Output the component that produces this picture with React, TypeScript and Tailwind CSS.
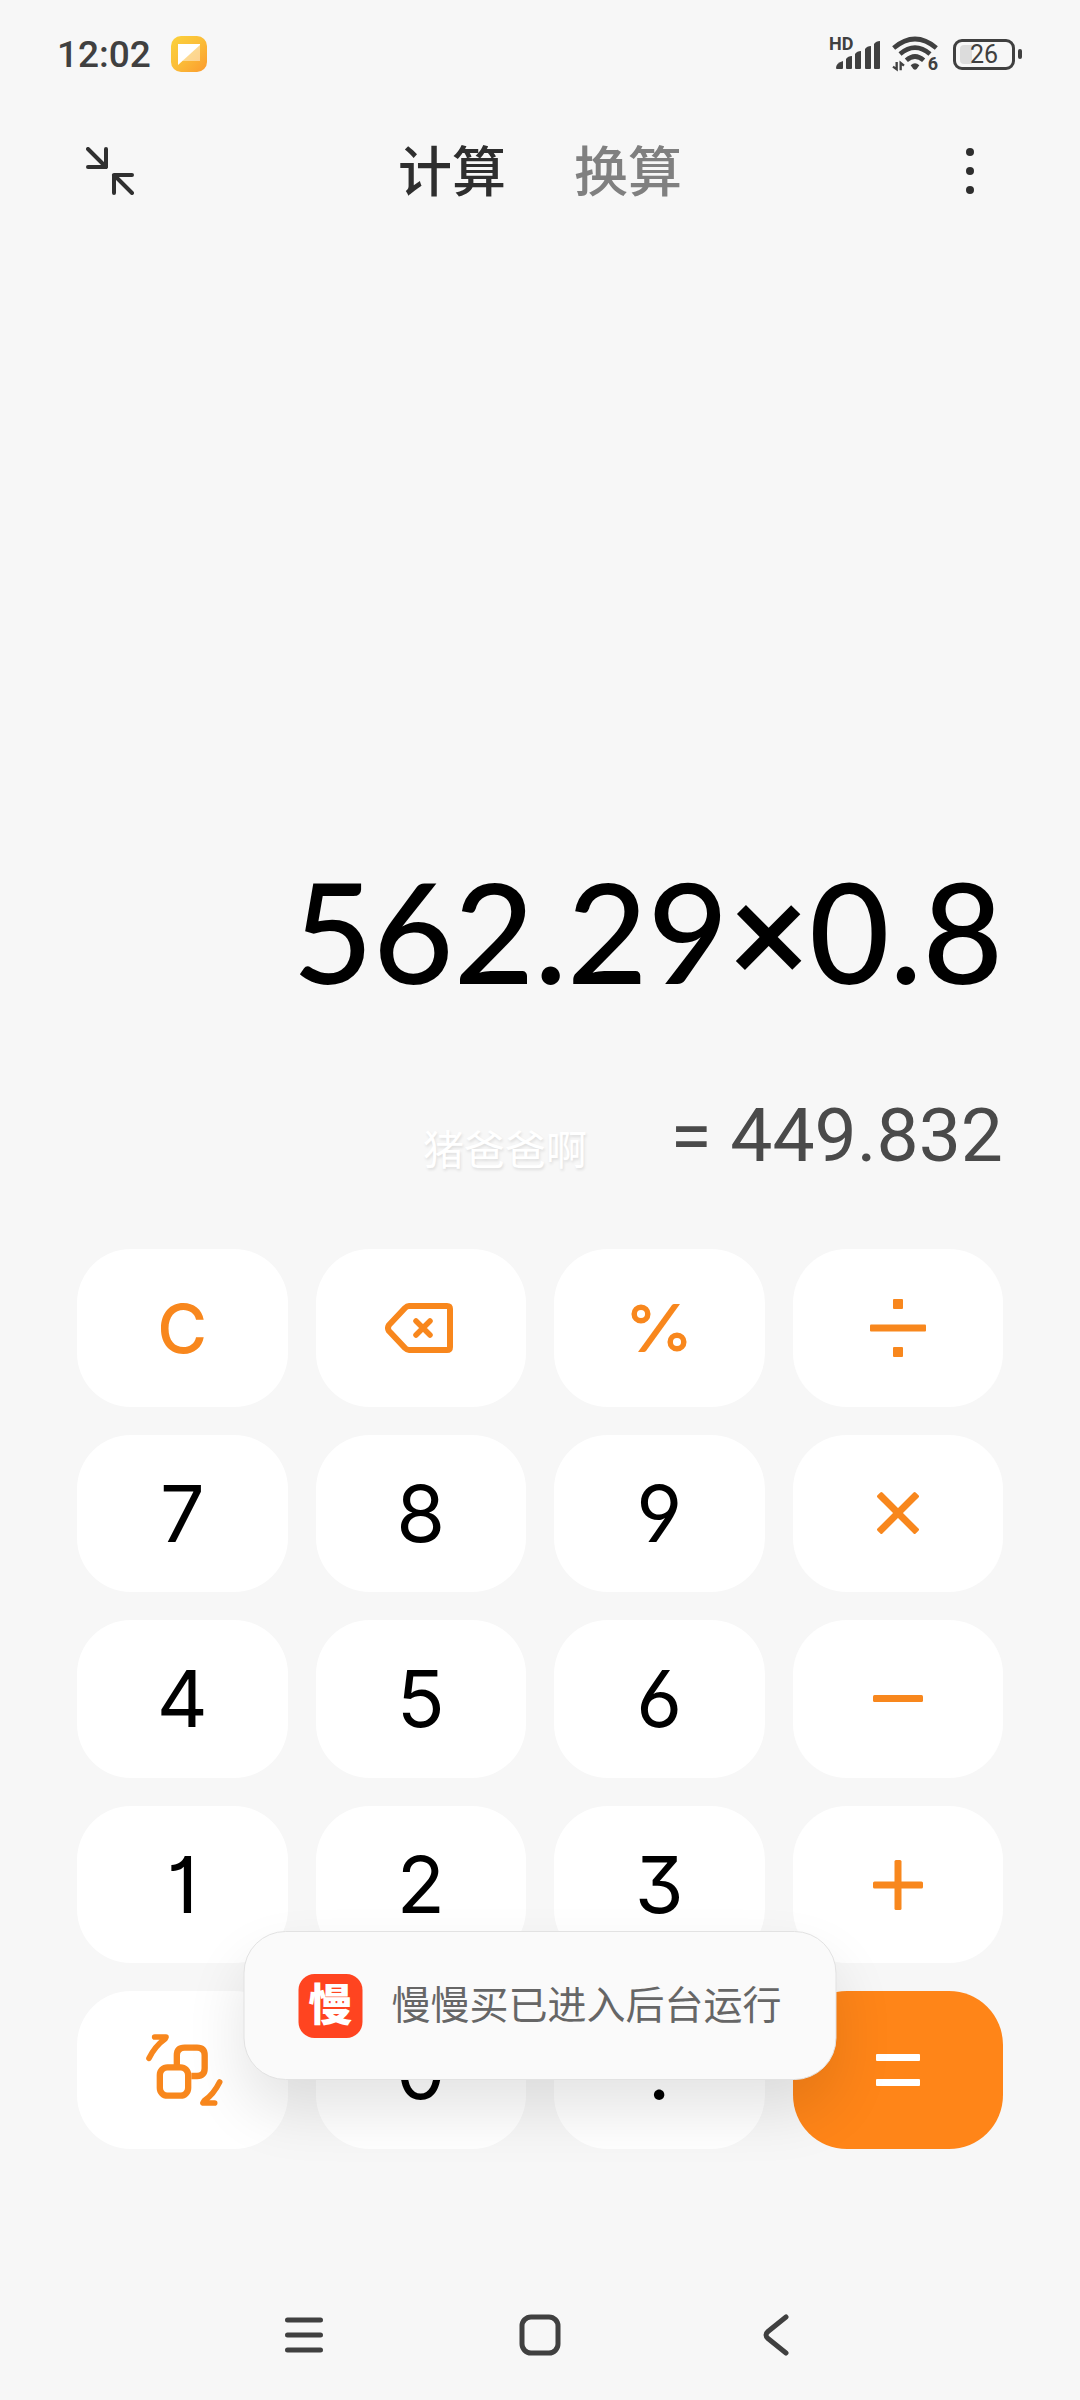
import { ReactNode, useState } from 'react';

type Key = {
  id: string;
  label: string;
  content: ReactNode;
  variant?: 'operator' | 'primary';
};

const tabs = ['计算', '换算'];

function NotesBadge() {
  return (
    <svg width="36" height="36" viewBox="0 0 36 36" aria-hidden="true">
      <defs>
        <linearGradient id="notes" x1="0" y1="0" x2="1" y2="1">
          <stop offset="0" stopColor="#fbd23c" />
          <stop offset="0.5" stopColor="#fbbd38" />
          <stop offset="1" stopColor="#fb9a2e" />
        </linearGradient>
      </defs>
      <rect width="36" height="36" rx="10" fill="url(#notes)" />
      <path d="M29 8v17H11z" fill="#fff" opacity="0.45" />
      <path d="M7 8h22v1L7 29z" fill="#fff" />
    </svg>
  );
}

function SignalIcon() {
  return (
    <svg width="44" height="32" viewBox="0 0 44 32" aria-hidden="true">
      <g fill="#404040">
        <path d="M0 30q0-5 7-7v7q0 1-1 1H1q-1 0-1-1z" />
        <path d="M10 30V21q2-3 6-3v12q0 1-1 1h-4q-1 0-1-1z" />
        <path d="M19 30V16q2-3 6-3v17q0 1-1 1h-4q-1 0-1-1z" />
        <path d="M29 30V11q2-3 6-3v22q0 1-1 1h-4q-1 0-1-1z" />
        <path d="M38 30V6q2-3 6-3v27q0 1-1 1h-4q-1 0-1-1z" />
      </g>
    </svg>
  );
}

function WifiIcon() {
  return (
    <svg width="46" height="36" viewBox="0 0 138 108" aria-hidden="true">
      <g fill="none" stroke="#404040" strokeWidth="14">
        <path d="M5 36Q69-18 133 36" />
        <path d="M24 54Q69 16 114 54" />
        <path d="M43 73Q69 50 95 73" />
      </g>
      <path d="M56 88q13-12 26 0l-8 11q-5 4-10 0z" fill="#404040" />
      <g fill="none" stroke="#404040" strokeWidth="7">
        <path d="M3 92l11 8V78M36 89l-10-8v22" />
      </g>
    </svg>
  );
}

function Battery({ level }: { level: number }) {
  return (
    <div className="flex items-center gap-[3px]">
      <div className="relative flex h-[31px] w-[62px] items-center justify-center rounded-[9px] border-[3px] border-[#404040]">
        <div className="absolute inset-y-[3px] left-[4px] w-[12px] rounded-l-[4px] bg-[#dcdcdc]" />
        <span className="relative text-[25px] leading-none">{level}</span>
      </div>
      <div className="h-[10px] w-[4px] rounded-full bg-[#404040]" />
    </div>
  );
}

function StatusBar() {
  return (
    <div className="flex h-[108px] items-center justify-between pr-[58px] pl-[57px] text-[#404040]">
      <div className="flex items-center gap-[20px]">
        <span className="text-[37px] leading-none font-medium">12:02</span>
        <NotesBadge />
      </div>
      <div className="flex items-center gap-[15px]">
        <div className="flex items-center gap-[12px]">
          <div className="relative flex w-[51px] justify-end">
            <span className="absolute -top-[3px] left-0 text-[18px] leading-none font-bold">
              HD
            </span>
            <SignalIcon />
          </div>
          <div className="relative">
            <WifiIcon />
            <span className="absolute right-0 -bottom-[1px] text-[18px] leading-none font-bold">
              6
            </span>
          </div>
        </div>
        <Battery level={26} />
      </div>
    </div>
  );
}

function Header() {
  const [activeTab, setActiveTab] = useState(tabs[0]);

  return (
    <header className="flex h-[126px] items-center justify-between px-[86px]">
      <button aria-label="小窗" className="w-[48px]">
        <svg width="48" height="48" viewBox="0 0 48 48" aria-hidden="true">
          <path
            d="M2 2l18 18M20 2v18H2M46 46L28 28M46 28H28v18"
            fill="none"
            stroke="#303030"
            strokeWidth="4"
            strokeLinecap="round"
            strokeLinejoin="round"
          />
        </svg>
      </button>
      <nav className="flex gap-[68px] pt-[5px]">
        {tabs.map(tab => (
          <button
            key={tab}
            className={
              tab === activeTab
                ? 'text-[54px] leading-[72px] font-medium text-[#2e2e2e]'
                : 'text-[54px] leading-[72px] font-medium text-[#808080]'
            }
            onClick={() => setActiveTab(tab)}
          >
            {tab}
          </button>
        ))}
      </nav>
      <button aria-label="更多" className="flex w-[48px] justify-center">
        <svg width="8" height="48" viewBox="0 0 8 48" aria-hidden="true">
          <g fill="#2e2e2e">
            <circle cx="4" cy="5" r="4" />
            <circle cx="4" cy="24" r="4" />
            <circle cx="4" cy="43" r="4" />
          </g>
        </svg>
      </button>
    </header>
  );
}

function Display() {
  return (
    <section className="relative flex flex-1 flex-col items-end justify-end gap-[76px] px-[77px] pb-[66px]">
      <p className="font-[Lato] text-[139px] leading-[160px] font-medium text-black">
        562.29<span className="font-bold">×</span>0.8
      </p>
      <p className="text-[75px] leading-[96px] text-[#4a4a4a]">= 449.832</p>
      <span className="absolute bottom-[68px] left-[423px] text-[41px] leading-[60px] text-white [text-shadow:1px_2px_3px_rgba(0,0,0,0.1)]">
        猪爸爸啊
      </span>
    </section>
  );
}

const BackspaceIcon = () => (
  <svg width="72" height="50" viewBox="0 0 72 50" aria-hidden="true">
    <g
      fill="none"
      stroke="currentColor"
      strokeLinecap="round"
      strokeLinejoin="round"
    >
      <path
        d="M24 3H62q3 0 3 3V44q0 3-3 3H24q-2 0-4-2L4 28q-2-3 0-6L20 5q2-2 4-2z"
        strokeWidth="6"
      />
      <path d="M31 18l14 14M45 18L31 32" strokeWidth="5.5" />
    </g>
  </svg>
);

const PercentIcon = () => (
  <svg width="56" height="48" viewBox="0 0 56 48" aria-hidden="true">
    <g fill="none" stroke="currentColor" strokeWidth="5.5">
      <circle cx="10" cy="10" r="6.8" />
      <circle cx="46" cy="38" r="6.8" />
    </g>
    <path d="M43 0h6L15 47q-1 1-2 1H7L41 1q1-1 2-1z" fill="currentColor" />
  </svg>
);

const DivideIcon = () => (
  <svg width="56" height="58" viewBox="0 0 56 58" aria-hidden="true">
    <g fill="currentColor">
      <rect x="23" width="10" height="10" rx="1" />
      <rect y="25.5" width="56" height="7" rx="1" />
      <rect x="23" y="48" width="10" height="10" rx="1" />
    </g>
  </svg>
);

const TimesIcon = () => (
  <svg width="50" height="50" viewBox="0 0 50 50" aria-hidden="true">
    <g fill="currentColor">
      <rect x="-2" y="21.5" width="54" height="7" rx="1.5" transform="rotate(45 25 25)" />
      <rect x="-2" y="21.5" width="54" height="7" rx="1.5" transform="rotate(-45 25 25)" />
    </g>
  </svg>
);

const MinusIcon = () => (
  <svg width="50" height="7" viewBox="0 0 50 7" aria-hidden="true">
    <rect width="50" height="7" rx="1.5" fill="currentColor" />
  </svg>
);

const PlusIcon = () => (
  <svg width="50" height="50" viewBox="0 0 50 50" aria-hidden="true">
    <g fill="currentColor">
      <rect y="21.5" width="50" height="7" rx="1.5" />
      <rect x="21.5" width="7" height="50" rx="1.5" />
    </g>
  </svg>
);

const EqualsIcon = () => (
  <svg width="44" height="32" viewBox="0 0 44 32" aria-hidden="true">
    <g fill="currentColor">
      <rect width="44" height="7" rx="1" />
      <rect y="25" width="44" height="7" rx="1" />
    </g>
  </svg>
);

const ConvertIcon = () => (
  <svg width="81" height="72" viewBox="35 62 243 216" aria-hidden="true">
    <g
      fill="none"
      stroke="currentColor"
      strokeLinecap="round"
      strokeLinejoin="round"
    >
      <rect x="88.5" y="162" width="85" height="85" rx="23" strokeWidth="19" />
      <path
        d="M139.500 155V126Q139.500 103 163 103H200Q223 103 223 126V165Q223 188 200 188H183"
        strokeWidth="19"
        strokeLinecap="butt"
      />
      <path d="M73 71H107L104 77Q74 98 56 135" strokeWidth="17" />
      <path d="M268 206Q250 243 222 262L218 269H253" strokeWidth="17" />
    </g>
  </svg>
);

const keys: Key[] = [
  {
    id: 'clear',
    label: 'C',
    content: <span className="text-[68px] leading-none font-medium">C</span>,
    variant: 'operator',
  },
  { id: 'back', label: '删除', content: <BackspaceIcon />, variant: 'operator' },
  { id: 'percent', label: '百分号', content: <PercentIcon />, variant: 'operator' },
  { id: 'divide', label: '除', content: <DivideIcon />, variant: 'operator' },
  { id: '7', label: '7', content: '7' },
  { id: '8', label: '8', content: '8' },
  { id: '9', label: '9', content: '9' },
  { id: 'times', label: '乘', content: <TimesIcon />, variant: 'operator' },
  { id: '4', label: '4', content: '4' },
  { id: '5', label: '5', content: '5' },
  { id: '6', label: '6', content: '6' },
  { id: 'minus', label: '减', content: <MinusIcon />, variant: 'operator' },
  { id: '1', label: '1', content: '1' },
  { id: '2', label: '2', content: '2' },
  { id: '3', label: '3', content: '3' },
  { id: 'plus', label: '加', content: <PlusIcon />, variant: 'operator' },
  { id: 'convert', label: '切换', content: <ConvertIcon />, variant: 'operator' },
  { id: '0', label: '0', content: '0' },
  { id: 'dot', label: '.', content: '.' },
  { id: 'equals', label: '等于', content: <EqualsIcon />, variant: 'primary' },
];

const keyColors = {
  digit: 'bg-white text-black',
  operator: 'bg-white text-[#f8871d]',
  primary: 'bg-[#ff8518] text-white',
};

function Toast() {
  return (
    <div
      role="status"
      className="absolute bottom-[69px] left-1/2 flex h-[149px] -translate-x-1/2 items-center gap-[29px] rounded-[42px] border border-[#e2e2e2] bg-[#fafafa] px-[54px] shadow-[0_30px_60px_rgba(0,0,0,0.11)]"
    >
      <span className="flex size-[64px] items-center justify-center rounded-[16px] bg-[#ff4420] text-[44px] leading-none font-black text-white">
        慢
      </span>
      <span className="text-[39px] leading-[56px] whitespace-nowrap text-[#666666]">
        慢慢买已进入后台运行
      </span>
    </div>
  );
}

function Keypad() {
  return (
    <main className="relative mb-[121px]">
      <div className="grid h-[900px] grid-cols-4 grid-rows-5 gap-[28px] px-[77px] font-[Inter] text-[79px] leading-none [font-feature-settings:'cv01','cv03','cv04','cv09']">
        {keys.map(key => (
          <button
            key={key.id}
            aria-label={key.label}
            className={`flex items-center justify-center rounded-[54px] ${keyColors[key.variant ?? 'digit']}`}
          >
            {key.content}
          </button>
        ))}
      </div>
      <Toast />
    </main>
  );
}

function NavBar() {
  return (
    <nav className="flex h-[130px] items-center justify-center gap-[188px] text-[#404040]">
      <button aria-label="最近任务" className="flex w-[48px] justify-center">
        <svg width="38" height="42" viewBox="0 0 38 42" aria-hidden="true">
          <path
            d="M2.500 6h33M2.500 21h33M2.500 36h33"
            stroke="currentColor"
            strokeWidth="5"
            strokeLinecap="round"
          />
        </svg>
      </button>
      <button aria-label="主屏幕" className="flex w-[48px] justify-center">
        <svg width="42" height="42" viewBox="0 0 42 42" aria-hidden="true">
          <rect
            x="3"
            y="3"
            width="36"
            height="36"
            rx="9"
            fill="none"
            stroke="currentColor"
            strokeWidth="5"
          />
        </svg>
      </button>
      <button aria-label="返回" className="flex w-[48px] justify-center">
        <svg width="26" height="42" viewBox="0 0 26 42" aria-hidden="true">
          <path
            d="M23 3L5 17.500Q1 21 5 24.500L23 39"
            fill="none"
            stroke="currentColor"
            strokeWidth="5"
            strokeLinecap="round"
          />
        </svg>
      </button>
    </nav>
  );
}

export default function App() {
  return (
    <div className="flex min-h-screen flex-col bg-[#f7f7f7] font-[Roboto,'Noto_Sans_CJK_SC',sans-serif]">
      <StatusBar />
      <Header />
      <Display />
      <Keypad />
      <NavBar />
    </div>
  );
}
